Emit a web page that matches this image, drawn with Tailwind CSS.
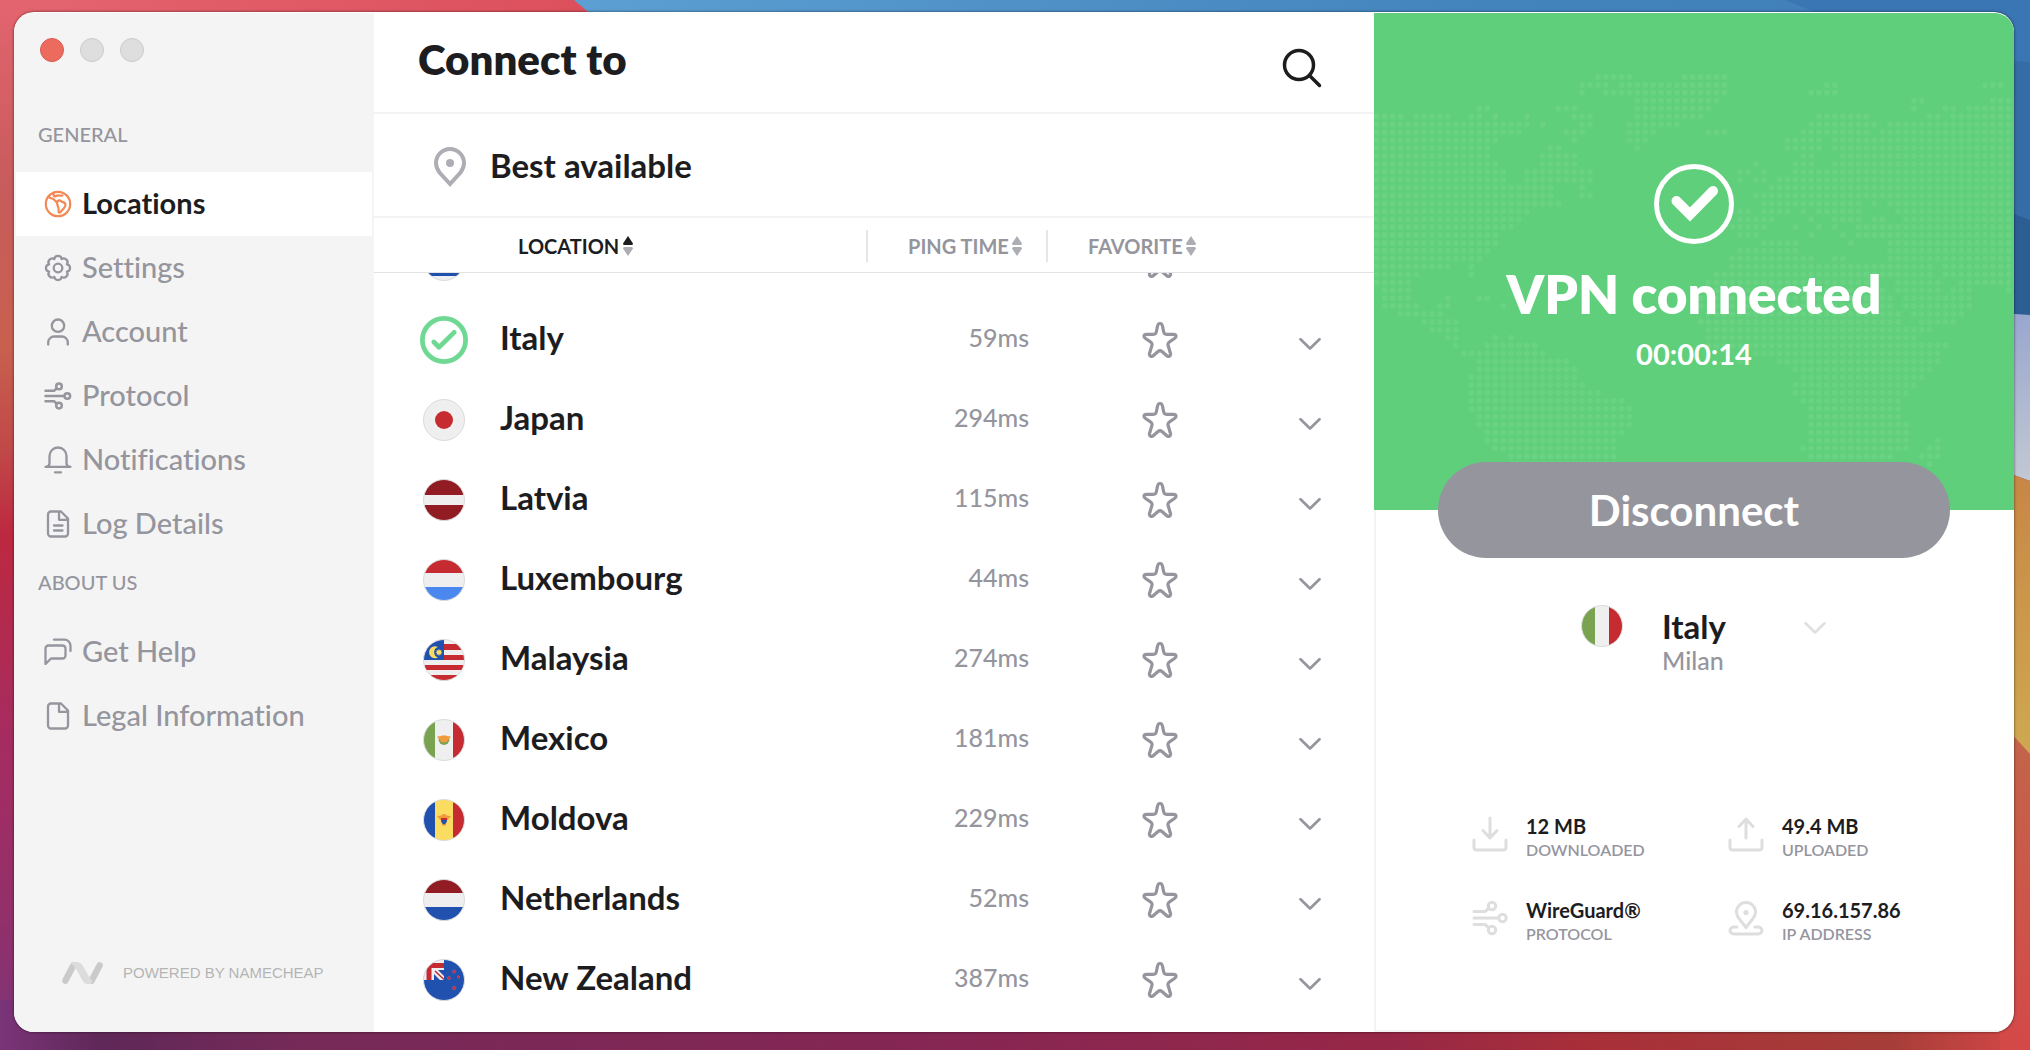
<!DOCTYPE html>
<html lang="en">
  <head>
    <meta charset="UTF-8" />
    <meta name="viewport" content="width=device-width, initial-scale=1.0" />
    <title>VPN - Locations</title>
    <script src="https://cdn.jsdelivr.net/npm/@tailwindcss/browser@4"></script>
  </head>
  <body
    class="relative isolate flex h-screen overflow-hidden pt-3 pr-4 pb-[18px] pl-[14px] font-['Lato',sans-serif] text-[#1d1d1f]"
  >
    <!-- Desktop wallpaper -->
    <svg
      class="absolute inset-0 -z-10 h-full w-full"
      viewBox="0 0 2030 1050"
      preserveAspectRatio="none"
      aria-hidden="true"
    >
      <defs>
        <linearGradient id="wallLeft" x1="0" y1="0" x2="0" y2="1">
          <stop offset="0" stop-color="#e3646f" />
          <stop offset="0.18" stop-color="#c75b5b" />
          <stop offset="0.33" stop-color="#c8604f" />
          <stop offset="0.43" stop-color="#c04848" />
          <stop offset="0.51" stop-color="#bd2840" />
          <stop offset="0.7" stop-color="#a62c60" />
          <stop offset="0.87" stop-color="#93306a" />
          <stop offset="1" stop-color="#7a3478" />
        </linearGradient>
        <linearGradient id="wallTop">
          <stop offset="0" stop-color="#e3646f" />
          <stop offset="1" stop-color="#dc4f5b" />
        </linearGradient>
        <linearGradient id="wallBlue">
          <stop offset="0" stop-color="#5c9fd2" />
          <stop offset="0.6" stop-color="#4485bd" />
          <stop offset="1" stop-color="#3f7db8" />
        </linearGradient>
        <linearGradient id="wallBottom">
          <stop offset="0" stop-color="#7a3478" />
          <stop offset="0.05" stop-color="#5f2858" />
          <stop offset="0.15" stop-color="#762a58" />
          <stop offset="0.45" stop-color="#852654" />
          <stop offset="0.68" stop-color="#962747" />
          <stop offset="0.78" stop-color="#a82f39" />
          <stop offset="0.93" stop-color="#a63d38" />
          <stop offset="1" stop-color="#d44848" />
        </linearGradient>
        <linearGradient id="wallLilac" x1="0" y1="0" x2="0" y2="1">
          <stop offset="0" stop-color="#99a6cf" />
          <stop offset="1" stop-color="#c2c8d3" />
        </linearGradient>
        <linearGradient id="wallGold" x1="0" y1="0" x2="0" y2="1">
          <stop offset="0" stop-color="#c88645" />
          <stop offset="1" stop-color="#cfa951" />
        </linearGradient>
        <linearGradient id="wallCoral" x1="0" y1="0" x2="0" y2="1">
          <stop offset="0" stop-color="#c2664a" />
          <stop offset="1" stop-color="#d44848" />
        </linearGradient>
      </defs>
      <rect width="2030" height="1050" fill="#852654" />
      <rect width="40" height="1050" fill="url(#wallLeft)" />
      <rect y="1000" width="2030" height="50" fill="url(#wallBottom)" />
      <rect x="14" width="600" height="40" fill="url(#wallTop)" />
      <path d="M574 0H2030V320H1960V40H622z" fill="url(#wallBlue)" />
      <path d="M1785 0H2030V62H1940z" fill="#3a76b3" />
      <path d="M2000 60L2030 62V220L2000 208z" fill="#366da6" />
      <path d="M2000 208L2030 220V316H2000z" fill="#2c5d93" />
      <path d="M2000 313L2030 315V481L2000 470z" fill="url(#wallLilac)" />
      <path d="M2000 470L2030 481V760H2000z" fill="url(#wallGold)" />
      <path d="M2000 721L2030 754V1050H2000z" fill="url(#wallCoral)" />
    </svg>

    <div
      class="flex min-w-0 flex-1 overflow-hidden rounded-[20px] border-t border-white/70 bg-white shadow-[0_0_3px_rgba(0,0,0,0.6)]"
    >
      <!-- Sidebar -->
      <aside class="flex w-90 shrink-0 flex-col bg-[#f4f4f4] text-[#95959e]">
        <div class="flex h-[95px] gap-4 pt-[25px] pl-[26px]">
          <button class="size-6 rounded-full border border-[#d65b50] bg-[#ed6a5e]" aria-label="Close"></button>
          <button class="size-6 rounded-full border border-[#c9c9c9] bg-[#dedede]" aria-label="Minimize"></button>
          <button class="size-6 rounded-full border border-[#c9c9c9] bg-[#dedede]" aria-label="Zoom"></button>
        </div>

        <nav class="px-[2px] text-[29px] leading-8 font-medium [font-variant-ligatures:none]">
          <h2 class="flex h-16 items-center pb-3 pl-[22px] text-xl">GENERAL</h2>
          <a href="#locations" class="flex h-16 items-center gap-[10px] bg-white pl-7 font-bold text-[#1d1d1f]">
            <svg class="size-7 text-[#f38a55]" viewBox="0 0 28 28" fill="none" stroke="currentColor" stroke-width="2.2" stroke-linecap="round" stroke-linejoin="round">
              <circle cx="14" cy="14" r="12.2" />
              <path d="M4.500 6.500C6.500 9 9 8 10.500 10c1.500 1.500 3 2 3 5 .3 2.500 1.800 3.300 1 5.500-.5 2.500 1 3 2.500 1 1.500-2.500 4.500-3.500 4.500-6.500 0-3-2.500-2.500-4-3.500-1.500-1.500-4-1.500-4 .5" />
              <path d="M10 2.500C9 5.500 10 7.500 12 6c2-1.500 4 .3 6.500-.5" />
            </svg>
            <span class="pb-[2px]">Locations</span>
          </a>
          <a href="#settings" class="flex h-16 items-center gap-[10px] pl-7">
            <svg class="size-7" viewBox="0 0 28 28" fill="none" stroke="currentColor" stroke-width="2.3" stroke-linejoin="round">
              <path d="M22.900 10.300a3.750 3.750 0 0 1 0 7.400 3.750 3.750 0 0 1-5.200 5.200 3.750 3.750 0 0 1-7.400 0 3.750 3.750 0 0 1-5.200-5.200 3.750 3.750 0 0 1 0-7.400 3.750 3.750 0 0 1 5.200-5.200 3.750 3.750 0 0 1 7.400 0 3.750 3.750 0 0 1 5.200 5.200z" />
              <circle cx="14" cy="14" r="4.300" />
            </svg>
            <span class="pb-[2px]">Settings</span>
          </a>
          <a href="#account" class="flex h-16 items-center gap-[10px] pl-7">
            <svg class="size-7" viewBox="0 0 28 28" fill="none" stroke="currentColor" stroke-width="2.300" stroke-linecap="round">
              <circle cx="14" cy="7.700" r="6.200" />
              <path d="M4.200 26.500v-2a6 6 0 0 1 6-6h7.600a6 6 0 0 1 6 6v2" />
            </svg>
            <span class="pb-[2px]">Account</span>
          </a>
          <a href="#protocol" class="flex h-16 items-center gap-[10px] pl-7">
            <svg class="size-7" viewBox="0 0 28 28" fill="none" stroke="currentColor" stroke-width="2.500" stroke-linecap="round" stroke-linejoin="round">
              <path d="M1.500 8.700h8.500l2.300-2M1.500 14h18M1.500 19.300h8.500l2.300 2" />
              <circle cx="15" cy="4.400" r="2.800" />
              <circle cx="23.300" cy="14" r="2.800" />
              <circle cx="15" cy="23.600" r="2.800" />
            </svg>
            <span class="pb-[2px]">Protocol</span>
          </a>
          <a href="#notifications" class="flex h-16 items-center gap-[10px] pl-7">
            <svg class="size-7" viewBox="0 0 28 28" fill="none" stroke="currentColor" stroke-width="2.300" stroke-linecap="round" stroke-linejoin="round">
              <path d="M1.500 20.800h25M2.500 20.600c2 0 3-1.500 3-3.600V10a8.500 8.500 0 0 1 17 0v7c0 2.100 1 3.600 3 3.600M11 26.300h6" />
            </svg>
            <span class="pb-[2px]">Notifications</span>
          </a>
          <a href="#log" class="flex h-16 items-center gap-[10px] pl-7">
            <svg class="size-7" viewBox="0 0 28 28" fill="none" stroke="currentColor" stroke-width="2.300" stroke-linecap="round" stroke-linejoin="round">
              <path d="M17 1.500H7a3 3 0 0 0-3 3v19a3 3 0 0 0 3 3h14a3 3 0 0 0 3-3v-15zM15 1.800v8h8.500M10 15.500h8.500M10 20.500h8.500" />
            </svg>
            <span class="pb-[2px]">Log Details</span>
          </a>
          <h2 class="flex h-16 items-center pb-3 pl-[22px] text-xl">ABOUT US</h2>
          <a href="#help" class="flex h-16 items-center gap-[10px] pl-7">
            <svg class="size-7" viewBox="0 0 28 28" fill="none" stroke="currentColor" stroke-width="2.300" stroke-linecap="round" stroke-linejoin="round">
              <path d="M1.500 26V10.500a3 3 0 0 1 3-3h14a3 3 0 0 1 3 3v7a3 3 0 0 1-3 3H7zM10 1.700h10.500a6 6 0 0 1 6 6V13" />
            </svg>
            <span class="pb-[2px]">Get Help</span>
          </a>
          <a href="#legal" class="flex h-16 items-center gap-[10px] pl-7">
            <svg class="size-7" viewBox="0 0 28 28" fill="none" stroke="currentColor" stroke-width="2.300" stroke-linecap="round" stroke-linejoin="round">
              <path d="M17 1.500H7a3 3 0 0 0-3 3v19a3 3 0 0 0 3 3h14a3 3 0 0 0 3-3v-15zM15 1.800v8h8.500" />
            </svg>
            <span class="pb-[2px]">Legal Information</span>
          </a>
        </nav>

        <div class="mt-auto flex items-center gap-5 pb-[47px] pl-12 font-['Liberation_Sans',sans-serif] text-[15px] leading-6 text-[#b4b4b4]">
          <svg class="h-[22px] w-[41px]" viewBox="0 0 41 22" fill="none" stroke-width="6.400" stroke-linecap="round">
            <path d="M3.400 18.600L11.300 3.400M29.700 18.600L37.600 3.400" stroke="#cacaca" />
            <path d="M8.500 1.500Q10.500 0 12.500 0H15Q18.500 0 20 2.500L30.500 20Q29 22 27 22H26Q22.500 22 21 19.500L13.500 6Q12 3 8.500 1.500z" fill="#dcdcdc" />
          </svg>
          POWERED BY NAMECHEAP
        </div>
      </aside>

      <!-- Location list -->
      <main class="flex min-w-0 flex-1 flex-col">
        <header class="flex h-[101px] shrink-0 items-center justify-between border-b-2 border-[#f3f3f3] pr-13 pl-11">
          <h1 class="pb-2 text-[42px] leading-12 font-extrabold">Connect to</h1>
          <button class="pt-[10px]" aria-label="Search">
            <svg class="size-10" viewBox="0 0 40 40" fill="none" stroke="currentColor" stroke-width="3.500" stroke-linecap="round">
              <circle cx="17" cy="17" r="14.500" />
              <path d="M28 28l9.500 9.500" />
            </svg>
          </button>
        </header>

        <button class="flex h-[104px] shrink-0 items-center gap-6 border-b-2 border-[#f3f3f3] pl-[60px] text-left text-[33px] leading-10 font-bold">
          <svg class="mt-1 h-10 w-8" viewBox="0 0 32 40" fill="none" stroke="#adadb4" stroke-width="4">
            <path d="M16 37L5.500 25.500C3.300 22.500 2 19.800 2 16a14 14 0 0 1 28 0c0 3.800-1.300 6.500-3.500 9.500z" />
            <circle cx="16" cy="16" r="4" fill="#adadb4" stroke="none" />
          </svg>
          Best available
        </button>

        <!-- Reversed column, so the list opens scrolled to its end -->
        <div class="flex min-h-0 flex-1 flex-col-reverse overflow-y-auto [scrollbar-width:none]">
          <div class="pb-3">
            <table class="w-full table-fixed border-separate border-spacing-0">
              <thead class="text-xl leading-8 text-[#95959e]">
                <tr>
                  <th class="sticky top-0 z-10 border-b border-[#e3e3e3] bg-white p-0 pt-3 pb-[10px]">
                    <button class="flex w-full items-center gap-1 border-r-2 border-[#e6e6e6] pl-36 font-bold text-[#1d1d1f]">
                      LOCATION
                      <svg class="h-5 w-[10px]" viewBox="0 0 10 20"><path d="M5 0L10 7.500Q10 9 8.500 9h-7Q0 9 0 7.500z" fill="#1d1d1f" /><path d="M5 20L10 12.500Q10 11 8.500 11h-7Q0 11 0 12.500z" fill="#adadb4" /></svg>
                    </button>
                  </th>
                  <th class="sticky top-0 z-10 w-[180px] border-b border-[#e3e3e3] bg-white p-0 pt-3 pb-[10px]">
                    <button class="flex w-full items-center gap-[3px] border-r-2 border-[#e6e6e6] pl-10 font-bold">
                      PING TIME
                      <svg class="h-5 w-[10px]" viewBox="0 0 10 20" fill="#adadb4"><path d="M5 0L10 7.500Q10 9 8.500 9h-7Q0 9 0 7.500zM5 20L10 12.500Q10 11 8.500 11h-7Q0 11 0 12.500z" /></svg>
                    </button>
                  </th>
                  <th class="sticky top-0 z-10 w-[224px] border-b border-[#e3e3e3] bg-white p-0 pt-3 pb-[10px]">
                    <button class="flex w-full items-center gap-[3px] pl-10 font-bold">
                      FAVORITE
                      <svg class="h-5 w-[10px]" viewBox="0 0 10 20" fill="#adadb4"><path d="M5 0L10 7.500Q10 9 8.500 9h-7Q0 9 0 7.500zM5 20L10 12.500Q10 11 8.500 11h-7Q0 11 0 12.500z" /></svg>
                    </button>
                  </th>
                  <th class="sticky top-0 z-10 w-[102px] border-b border-[#e3e3e3] bg-white p-0" aria-label="Details"></th>
                </tr>
              </thead>
              <tbody id="location-list"></tbody>
            </table>
          </div>
        </div>
      </main>

      <!-- Connection status -->
      <section class="flex w-[640px] shrink-0 flex-col">
        <div class="relative flex h-[497px] flex-col items-center overflow-hidden bg-[#5fcf7c] pt-[151px] text-white">
          <svg id="dot-map" class="absolute top-0 left-0 h-[497px] w-[640px]" viewBox="0 0 640 497" fill="#69d283" aria-hidden="true"></svg>
          <svg class="relative size-20" viewBox="0 0 80 80" fill="none" stroke="currentColor">
            <circle cx="40" cy="40" r="37.500" stroke-width="5" />
            <path d="M22.500 37L36 50.500 59 27" stroke-width="10" stroke-linecap="round" stroke-linejoin="miter" />
          </svg>
          <h2 class="relative pt-[18px] text-[53px] leading-16 font-extrabold">VPN connected</h2>
          <p class="relative pt-2 text-[29px] leading-10 font-bold">00:00:14</p>
        </div>

        <div class="flex flex-1 flex-col border-b-2 border-l-2 border-[#f3f3f3] pr-16 pl-[62px]">
          <button class="relative -mt-12 h-24 rounded-[48px] bg-[#95959e] text-[42px] leading-12 font-bold text-white">
            Disconnect
          </button>

          <button class="flex items-start pt-11 pl-[140px] text-left">
            <svg id="current-flag" class="size-12" viewBox="0 0 48 48"></svg>
            <span class="w-[152px] pl-9">
              <span class="block text-[33px] leading-12 font-bold">Italy</span>
              <span class="block text-[25px] leading-5 font-medium text-[#95959e]">Milan</span>
            </span>
            <svg class="mt-5 ml-[26px] h-3 w-[22px]" viewBox="0 0 22 12" fill="none" stroke="#e0e0e2" stroke-width="2.700" stroke-linecap="round" stroke-linejoin="round"><path d="M1.500 1.300L11 10.500 20.500 1.300" /></svg>
          </button>

          <dl class="mt-auto mb-20 grid grid-cols-2 gap-y-8">
            <div class="flex h-[52px] gap-[18px] pl-[34px]">
              <svg class="mt-0.5 size-9" viewBox="0 0 36 36" fill="none" stroke="#dedee0" stroke-width="3" stroke-linecap="round" stroke-linejoin="round">
                <path d="M18 2v19M11 14.500l7 7.500 7-7.500M2 24v7q0 3 3 3h26q3 0 3-3v-7" />
              </svg>
              <div class="flex flex-col-reverse justify-end">
                <dt class="text-base leading-6 font-semibold text-[#95959e]">DOWNLOADED</dt>
                <dd class="text-xl leading-6 font-bold">12 MB</dd>
              </div>
            </div>
            <div class="flex h-[52px] gap-[18px] pl-[34px]">
              <svg class="mt-0.5 size-9" viewBox="0 0 36 36" fill="none" stroke="#dedee0" stroke-width="3" stroke-linecap="round" stroke-linejoin="round">
                <path d="M18 22V3M11 10.500L18 3l7 7.500M2 24v7q0 3 3 3h26q3 0 3-3v-7" />
              </svg>
              <div class="flex flex-col-reverse justify-end">
                <dt class="text-base leading-6 font-semibold text-[#95959e]">UPLOADED</dt>
                <dd class="text-xl leading-6 font-bold">49.4 MB</dd>
              </div>
            </div>
            <div class="flex h-[52px] gap-[18px] pl-[34px]">
              <svg class="mt-0.5 size-9" viewBox="0 0 36 36" fill="none" stroke="#dedee0" stroke-width="3" stroke-linecap="round" stroke-linejoin="round">
                <path d="M2 11.500h11l3-2.500M2 18h23M2 24.500h11l3 2.500" />
                <circle cx="20" cy="6" r="3.700" />
                <circle cx="30.500" cy="18" r="3.700" />
                <circle cx="20" cy="30" r="3.700" />
              </svg>
              <div class="flex flex-col-reverse justify-end">
                <dt class="text-base leading-6 font-semibold text-[#95959e]">PROTOCOL</dt>
                <dd class="text-xl leading-6 font-bold">WireGuard®</dd>
              </div>
            </div>
            <div class="flex h-[52px] gap-[18px] pl-[34px]">
              <svg class="mt-0.5 size-9" viewBox="0 0 36 36" fill="none" stroke="#dedee0" stroke-width="3" stroke-linecap="round" stroke-linejoin="round">
                <path d="M18 27.500l-7-9C9 16 8.500 14.500 8.500 12a9.500 9.500 0 0 1 19 0c0 2.500-.5 4-2.500 6.500zM9 27H6a4 3.500 0 0 0 0 7h24a4 3.500 0 0 0 0-7h-3" />
                <circle cx="18" cy="12.500" r="2.600" fill="#dedee0" stroke="none" />
              </svg>
              <div class="flex flex-col-reverse justify-end">
                <dt class="text-base leading-6 font-semibold text-[#95959e]">IP ADDRESS</dt>
                <dd class="text-xl leading-6 font-bold">69.16.157.86</dd>
              </div>
            </div>
          </dl>
        </div>
      </section>
    </div>

    <script>
      const RED = "#c52b31";
      const MAROON = "#921c23";
      const BLUE = "#2051ae";
      const WHITE = "#efefef";
      const GREEN = "#7aa351";
      const YELLOW = "#fadc60";

      // Stripes from left to right or top to bottom, as [colour, size] on a 42 unit square
      function stripes(list, vertical) {
        let pos = 0;
        return list
          .map(([color, size]) => {
            const rect = vertical
              ? `<rect x="${pos}" width="${size}" height="42" fill="${color}"/>`
              : `<rect y="${pos}" width="42" height="${size}" fill="${color}"/>`;
            pos += size;
            return rect;
          })
          .join("");
      }

      const flags = {
        israel: stripes([[WHITE, 5], [BLUE, 5], [WHITE, 22], [BLUE, 5], [WHITE, 5]]),
        italy: stripes([[GREEN, 14], [WHITE, 14], [RED, 14]], true),
        japan: `<rect width="42" height="42" fill="${WHITE}"/><circle cx="21" cy="21" r="9" fill="${RED}"/>`,
        latvia: stripes([[MAROON, 16], [WHITE, 10], [MAROON, 16]]),
        luxembourg: stripes([[RED, 14], [WHITE, 14], ["#4a87ee", 14]]),
        malaysia:
          stripes([[WHITE, 5], [RED, 6], [WHITE, 5], [RED, 5], [WHITE, 5], [RED, 5], [WHITE, 5], [RED, 6]]) +
          `<rect width="21" height="21" fill="${BLUE}"/>
           <path d="M15 8a6 6 0 1 0 0 10.500 5.500 5.500 0 0 1 0-10.500z" fill="${YELLOW}"/>
           <path d="M16 10l.8 1.500 1.700-.5-.5 1.500 1.500.8-1.500.8.5 1.700-1.700-.5L16 17l-.8-1.700-1.700.5.5-1.700-1.500-.8 1.500-.8-.5-1.500 1.700.5z" fill="${YELLOW}"/>`,
        mexico:
          stripes([[GREEN, 12], [WHITE, 18], [RED, 12]], true) +
          `<path d="M15.500 20a5.500 6 0 0 0 11 0z" fill="${GREEN}"/><path d="M14 17.500q4 0 5-1h4q1 1 5 1l-3 4q-1 2-4 2t-4-2z" fill="#f0993d"/>`,
        moldova:
          stripes([[BLUE, 12], [YELLOW, 18], [RED, 12]], true) +
          `<path d="M14 17q4 0 5-1l1-1h2l1 1q1 1 5 1l-3 3.500-2 2v4h-4v-4l-2-2z" fill="#f0993d"/><path d="M18 19h6v2h-6z" fill="${RED}"/><path d="M18 21h6q0 3-3 4.500-3-1.500-3-4.500z" fill="${BLUE}"/>`,
        netherlands: stripes([[MAROON, 14], [WHITE, 14], [BLUE, 14]]),
        newZealand: `<rect width="42" height="42" fill="${BLUE}"/><path d="M0 0h21v21H0z" fill="${WHITE}"/>
           <path d="M3.500 21V4H21v5H8.500v12z" fill="${RED}"/><path d="M11 21v-6l6 6zM15 11h6v6z" fill="${BLUE}"/><path d="M12 12l9 8.500" stroke="${RED}" stroke-width="1.500"/>
           <g fill="${RED}" stroke="#a9628f" stroke-width=".6"><circle cx="31" cy="12.500" r="1.600"/><circle cx="26" cy="19" r="1.600"/><circle cx="35.500" cy="18" r="1.200"/><circle cx="31" cy="29" r="1.800"/></g>`,
      };

      // A 42px disc in the middle of a 48px box
      function flagDisc(name, id) {
        return `<clipPath id="${id}"><circle cx="24" cy="24" r="20.500"/></clipPath>
          <g clip-path="url(#${id})"><g transform="translate(3 3)">${flags[name]}</g></g>
          <circle cx="24" cy="24" r="20.500" fill="none" stroke="#dcdcdc"/>`;
      }

      const connectedMark = `<circle cx="24" cy="24" r="21.600" fill="none" stroke="#6fd994" stroke-width="4.800"/>
        <path d="M13.800 26l5.200 5.200L34.200 16.400" fill="none" stroke="#6fd994" stroke-width="4.800" stroke-linecap="round" stroke-linejoin="round"/>`;

      const locations = [
        { name: "Israel", flag: "israel", ping: 96 },
        { name: "Italy", flag: "italy", ping: 59, connected: true },
        { name: "Japan", flag: "japan", ping: 294 },
        { name: "Latvia", flag: "latvia", ping: 115 },
        { name: "Luxembourg", flag: "luxembourg", ping: 44 },
        { name: "Malaysia", flag: "malaysia", ping: 274 },
        { name: "Mexico", flag: "mexico", ping: 181 },
        { name: "Moldova", flag: "moldova", ping: 229 },
        { name: "Netherlands", flag: "netherlands", ping: 52 },
        { name: "New Zealand", flag: "newZealand", ping: 387 },
      ];

      document.getElementById("location-list").innerHTML = locations
        .map(
          (l) => `
          <tr class="h-20">
            <td class="p-0 pl-[46px]">
              <div class="flex items-center gap-8">
                <svg class="size-12" viewBox="0 0 48 48">${l.connected ? connectedMark : flagDisc(l.flag, "row-" + l.flag)}</svg>
                <span class="pb-[6px] text-[33px] leading-10 font-bold">${l.name}</span>
              </div>
            </td>
            <td class="p-0 pr-[19px] pb-[6px] text-right text-[25px] leading-8 font-medium text-[#95959e]">${l.ping}ms</td>
            <td class="p-0">
              <button class="mx-auto block" aria-label="Add ${l.name} to favorites">
                <svg class="size-9" viewBox="-0.500 0 36 36" fill="none" stroke="#95959e" stroke-width="3.200" stroke-linejoin="round"><path d="M17.500 1.500Q19.500 1.500 20 4L21.200 10Q21.700 12.300 24 12.300L31 12.300Q33.500 12.500 33.500 14 33.600 15.500 32 16.500L27 19.800Q25 21 25.600 23.500L28 31.500Q28.300 33.500 27 34.200 25.500 34.800 24 33.500L19.500 29.500Q17.500 28 15.500 29.500L11 33.500Q9.500 34.800 8 34.200 6.700 33.500 7 31.500L9.400 23.500Q10 21 8 19.800L3 16.500Q1.400 15.500 1.500 14 1.500 12.500 4 12.300L11 12.300Q13.300 12.300 13.800 10L15 4Q15.500 1.500 17.500 1.500z"/></svg>
              </button>
            </td>
            <td class="p-0 pt-2 pl-[27px]">
              <button class="block" aria-label="Show ${l.name} servers">
                <svg class="h-3 w-[22px]" viewBox="0 0 22 12" fill="none" stroke="#95959e" stroke-width="2.700" stroke-linecap="round" stroke-linejoin="round"><path d="M1.500 1.300L11 10.500 20.500 1.300"/></svg>
              </button>
            </td>
          </tr>`
        )
        .join("");

      document.getElementById("current-flag").innerHTML = flagDisc("italy", "current");

      // World map: one entry per row of dots, each a list of column ranges
      const mapRows = [
        "28-32 39-44", "26-29 31-44 57-58 77-79", "26 29-44 55-58", "33-43 68-69 78-80",
        "13-14 23-25 33-42 68 72-73 75-80", "0-3 5-9 12-13 15 19 25-27 33-41 56-62 70-71 73-80",
        "0-19 21 26-27 32-38 55-63 65-80", "0-18 24-26 32-35 42-44 54-62 64-80",
        "0-15 25 32-34 52-56 58-80", "0-14 22-23 33 52-56 58-80", "0-14 21-25 54-55 59-80",
        "0-15 21-25 48 53-55 58-80", "0-16 19-27 46-47 49 53-80", "0-16 19-27 46 48-49 51-80",
        "0-22 26 50-80", "0-22 26-27 48-80", "0-23 49-61 63 65-80",
        "0-19 46-47 49-52 54 56-61 66-80", "0-18 46-50 55 58-61 63-64 67-80",
        "0-17 45-49 53 56 58 61-80", "0-15 46-48 55 59 61-80", "0-15 49-53 60 65-80",
        "0-14 46-53 65-80", "0-13 45-55 58-59 65-80", "0-9 12 45-70 72-80", "0-5 12 43-70 72-80",
        "0-4 42-63 66-71 74-80", "1-4 41-64 66-71 73-75 80", "1-4 9 13-14 41-65 67-75",
        "1-5 8-9 16 41-65 67-75", "3-8 42-66 68-74", "6-10 41-66 69-73", "7-10 42-70",
        "9-10 15 17 42-68", "10 14-20 42-72", "11-21 48-71", "13-24 46 51-71", "13-25 53-70",
        "12-25 54-69", "12-26 53-68", "12-28 53-67", "12-31 54-66", "12-32 55-66",
        "13-32 55-66", "13-32 55-67", "14-31 55-67", "14-30 55-67 71", "15-30 54-67 70-71",
        "17-30 55-65 69-71", "17-30 70",
      ];
      let dots = "";
      mapRows.forEach((row, y) => {
        row.split(" ").forEach((range) => {
          const [from, to = from] = range.split("-").map(Number);
          for (let x = from; x <= to; x++) {
            dots += `<circle cx="${(2.7 + x * 7.9).toFixed(1)}" cy="${(64 + y * 7.9).toFixed(1)}" r="3"/>`;
          }
        });
      });
      document.getElementById("dot-map").innerHTML = dots;
    </script>
  </body>
</html>
